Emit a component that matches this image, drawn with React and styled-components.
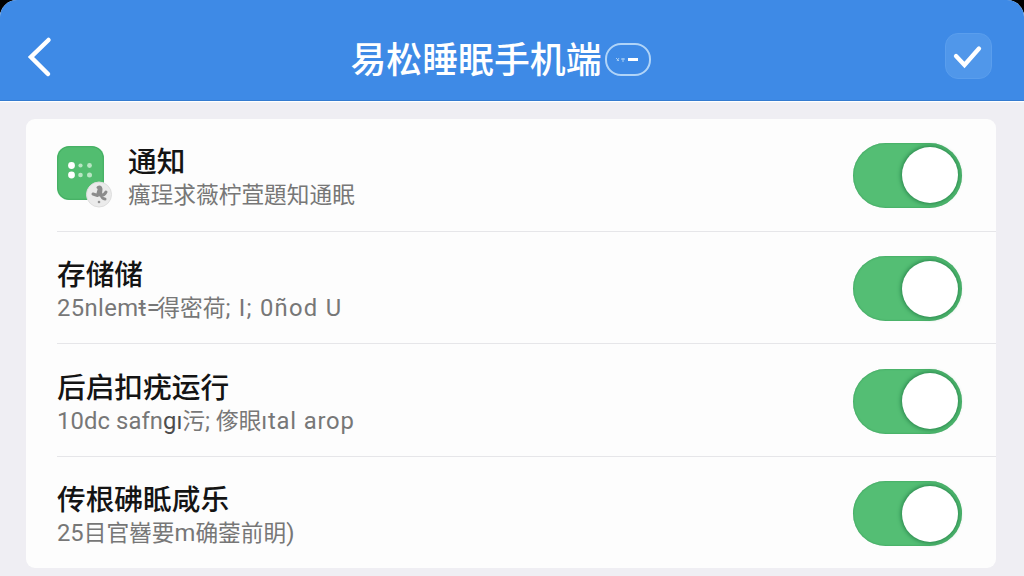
import React from 'react';
import styled, { createGlobalStyle } from 'styled-components';

const GlobalStyle = createGlobalStyle`
  * { box-sizing: border-box; }
  body { margin: 0; background: #000; font-family: Roboto, "Noto Sans CJK SC", sans-serif; overflow: hidden; }
`;

const Screen = styled.main`
  width: 1024px;
  height: 576px;
  overflow: hidden;
  border-radius: 17px 17px 0 0;
  background: #efeef3;
`;

const Header = styled.header`
  height: 101px;
  padding: 12px 32px 0 25px;
  display: flex;
  align-items: center;
  justify-content: space-between;
  background: #3e8ae6;
  border-bottom: 1px solid #347bd0;
  box-shadow: 0 1px 1px #fff;
`;

const BackButton = styled.button`
  width: 47px;
  height: 46px;
  padding: 0;
  border: 0;
  background: none;
  display: flex;
  align-items: center;
`;

const Heading = styled.div`
  display: flex;
  align-items: center;
  gap: 3px;
  margin: 6px 16px 0 0;
`;

const HeaderTitle = styled.h1`
  margin: 0;
  padding-bottom: 3px;
  font: 500 35.9px/43px "Noto Sans CJK SC", sans-serif;
  color: #fff;
  white-space: nowrap;
`;

const TitleBadge = styled.span`
  width: 46px;
  height: 33px;
  border: 2px solid #b0d4f8;
  border-radius: 16px;
  display: flex;
  align-items: center;
  justify-content: center;
`;

const ConfirmButton = styled.button`
  width: 47px;
  height: 46px;
  padding: 0;
  border: 1px solid #5a9eed;
  border-radius: 13px;
  background: #5097ea;
  display: flex;
  align-items: center;
  justify-content: center;
`;

const Card = styled.section`
  width: 970px;
  margin: 18px 0 0 26px;
  border-radius: 9px;
  background: #fdfdfd;
`;

const Row = styled.div`
  height: ${({ $last }) => ($last ? '111.5px' : '112.5px')};
  margin-left: 31px;
  padding: ${({ $hasIcon }) => ($hasIcon ? '1px' : '2.5px')} 34px 0 0;
  display: flex;
  align-items: center;
  border-bottom: ${({ $last }) => ($last ? '0' : '1.5px solid #e6e6e9')};
`;

const AppIcon = styled.div`
  width: 55px;
  height: 64px;
  margin: 3px 16px 0 0;
`;

const Copy = styled.div`
  flex: 1;
  padding-top: 2px;
`;

const RowTitle = styled.h2`
  margin: 0;
  font: 500 28.7px/36px "Noto Sans CJK SC", sans-serif;
  color: #141414;
  white-space: nowrap;
`;

const Subtitle = styled.p`
  margin: 0;
  height: 33px;
  display: flex;
  align-items: center;
  color: #777;
  white-space: pre;
`;

const Latin = styled.span`
  padding-top: 2px;
  font: 400 23.8px/33px Roboto, sans-serif;
  letter-spacing: ${({ $track = 0 }) => $track}px;
  color: ${({ $dark }) => ($dark ? '#4c4c4c' : 'inherit')};
`;

const Han = styled.span`
  padding-bottom: 2px;
  font: 400 22.7px/33px "Noto Sans CJK SC", sans-serif;
`;

const Switch = styled.button`
  width: 109px;
  height: 65px;
  padding: 0 4px 0 0;
  border: 0;
  border-radius: 33px;
  display: flex;
  align-items: center;
  justify-content: flex-end;
  background: #54be74;
  box-shadow: inset 0 0 2px #319552;
`;

const Knob = styled.span`
  width: 56px;
  height: 56px;
  border-radius: 50%;
  background: #fff;
  box-shadow: 0 0 4px 1px #27834a;
`;

const NotificationIcon = () => (
  <AppIcon>
    <svg width="56" height="64" viewBox="0 0 56 64">
      <rect x="0" y="1" width="47" height="54" rx="12" fill="#52bd70" />
      <rect x=".75" y="1.75" width="45.5" height="52.5" rx="11.5" fill="none" stroke="#45ae63" />
      <g fill="#fff">
        <circle cx="14.5" cy="20.5" r="3.4" />
        <circle cx="14.5" cy="30" r="3.4" />
      </g>
      <g fill="#b8e6c3">
        <circle cx="23.5" cy="20.5" r="2.1" />
        <circle cx="32.5" cy="20.5" r="2.4" />
        <circle cx="23.5" cy="30" r="2.3" />
        <circle cx="32.5" cy="30" r="2.5" />
      </g>
      <circle cx="42" cy="49.5" r="12.5" fill="#ebebeb" stroke="#dedede" />
      <path d="M41 42.5 Q43.5 41 44 44 L43.5 49 M36 49 L40.5 50.5 L42.5 43 M43 50 Q47 51 49 47 M44 50 Q45 54 48 54" fill="none" stroke="#8c8c8c" strokeWidth="3" strokeLinecap="round" strokeLinejoin="round" />
      <circle cx="42" cy="57" r="1.3" fill="#929292" />
    </svg>
  </AppIcon>
);

const settings = [
  {
    title: '通知',
    icon: <NotificationIcon />,
    detail: <Han>癘珵求薇柠萓題知通眠</Han>,
  },
  {
    title: '存储储',
    detail: (
      <>
        <Latin $track={0.4}>25nlemŧ</Latin>
        <Latin $track={-2.5}>=</Latin>
        <Han>得密荷</Han>
        <Latin $track={1.25}>; I; 0ñod U</Latin>
      </>
    ),
  },
  {
    title: '后启扣疣运行',
    detail: (
      <>
        <Latin $track={0.1}>10dc safn</Latin>
        <Latin $dark>gı</Latin>
        <Han>污</Han>
        <Latin>; </Latin>
        <Han>偧眼</Han>
        <Latin $track={0.8}>ıtal arop</Latin>
      </>
    ),
  },
  {
    title: '传根砩眡咸乐',
    detail: (
      <>
        <Latin>25</Latin>
        <Han>目官嶜要</Han>
        <Latin>m</Latin>
        <Han>确蓥前眀</Han>
        <Latin>)</Latin>
      </>
    ),
  },
];

export default function App() {
  return (
    <>
      <GlobalStyle />
      <Screen>
        <Header>
          <BackButton aria-label="返回">
            <svg width="30" height="44" viewBox="0 0 30 44">
              <path d="M23.5 6 L6 23 L23 40" fill="none" stroke="#fff" strokeWidth="4.5" strokeLinecap="round" strokeLinejoin="miter" />
            </svg>
          </BackButton>
          <Heading>
            <HeaderTitle>易松睡眠手机端</HeaderTitle>
            <TitleBadge>
              <svg width="42" height="29" viewBox="0 0 42 29">
                <path d="M9 13 l3 3 M12 13 l-2 3 M14 14 h4 M16 13 v4" fill="none" stroke="#a9cff5" strokeWidth="1" />
                <path d="M21 14.5 H31" stroke="#fff" strokeWidth="3" />
              </svg>
            </TitleBadge>
          </Heading>
          <ConfirmButton aria-label="确认">
            <svg width="32" height="30" viewBox="0 0 32 30">
              <path d="M4 15 L12.5 24 L27 7.5" fill="none" stroke="#fff" strokeWidth="4.3" strokeLinecap="round" strokeLinejoin="miter" />
            </svg>
          </ConfirmButton>
        </Header>
        <Card>
          {settings.map(({ title, icon, detail }, index) => (
            <Row key={title} $hasIcon={Boolean(icon)} $last={index === settings.length - 1}>
              {icon}
              <Copy>
                <RowTitle>{title}</RowTitle>
                <Subtitle>{detail}</Subtitle>
              </Copy>
              <Switch role="switch" aria-checked="true" aria-label={title}>
                <Knob />
              </Switch>
            </Row>
          ))}
        </Card>
      </Screen>
    </>
  );
}
